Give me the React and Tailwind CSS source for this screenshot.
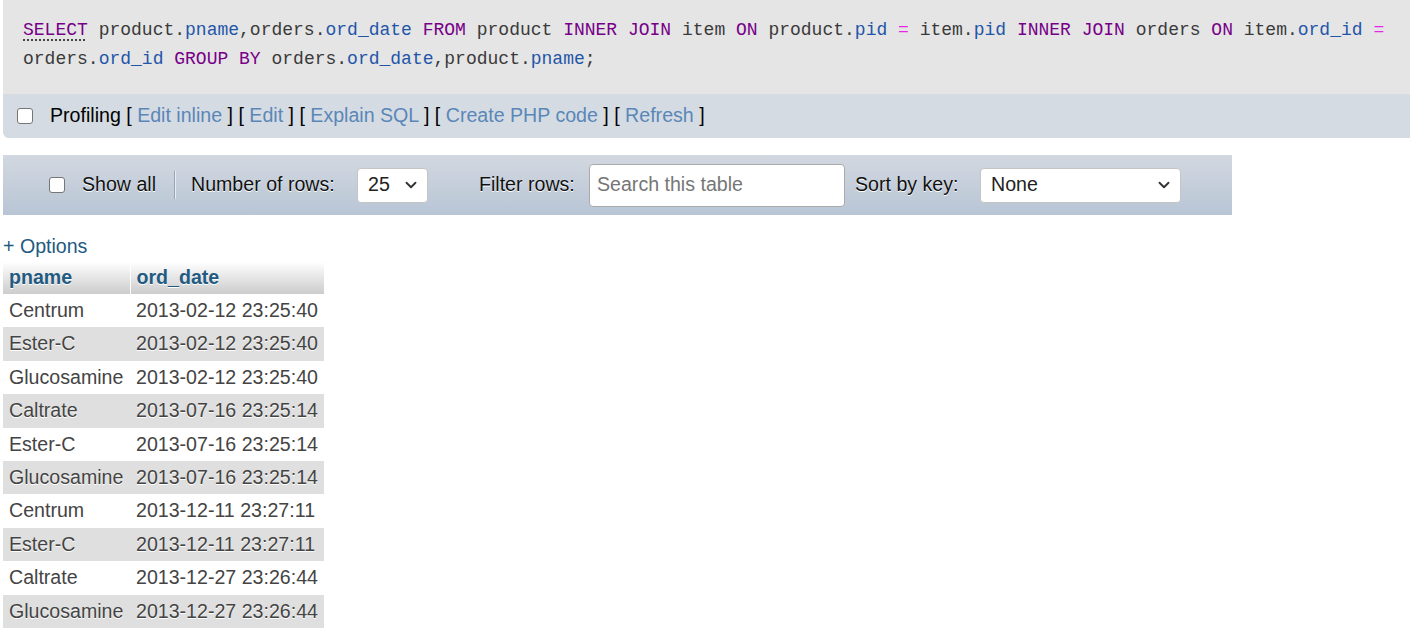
import React from 'react';
import { ChevronDown } from 'lucide-react';

const rows = [
  ['Centrum', '2013-02-12 23:25:40'],
  ['Ester-C', '2013-02-12 23:25:40'],
  ['Glucosamine', '2013-02-12 23:25:40'],
  ['Caltrate', '2013-07-16 23:25:14'],
  ['Ester-C', '2013-07-16 23:25:14'],
  ['Glucosamine', '2013-07-16 23:25:14'],
  ['Centrum', '2013-12-11 23:27:11'],
  ['Ester-C', '2013-12-11 23:27:11'],
  ['Caltrate', '2013-12-27 23:26:44'],
  ['Glucosamine', '2013-12-27 23:26:44'],
];

const Kw = ({ children }) => <span className="text-[#770088]">{children}</span>;
const Id = ({ children }) => <span className="text-[#1f56a8]">{children}</span>;
const Op = ({ children }) => <span className="text-[#e625e6]">{children}</span>;

const Checkbox = () => (
  <div className="w-[16px] h-[16px] bg-white border border-[#767676] rounded-[3px] shrink-0" />
);

const Select = ({ value, width }) => (
  <div
    className={`${width} h-[35px] bg-white border border-[#c5c5c5] rounded-[4px] flex items-center justify-between pl-[10px] pr-[7px] text-[#222] [text-shadow:none] shrink-0`}
  >
    <span>{value}</span>
    <ChevronDown size={18} strokeWidth={2.5} className="text-[#333]" />
  </div>
);

const Link = ({ children }) => <span className="text-[#5a87b8]">{children}</span>;

export default function App() {
  return (
    <div className="w-[1410px] h-[644px] overflow-hidden bg-white pl-[3px] font-['Liberation_Sans',Arial,sans-serif] text-[19.6px]">
      {/* SQL query box */}
      <div className="bg-[#e5e5e5] rounded-bl-[6px] overflow-hidden">
        <pre className="pl-[20px] pt-[16px] pb-[20px] font-['Liberation_Mono','DejaVu_Sans_Mono',monospace] text-[18px] leading-[29px] text-[#3a3a3a]">
          <span className="text-[#770088] underline decoration-dotted decoration-[#333] underline-offset-[5px]">SELECT</span>{' '}
          product.<Id>pname</Id>,orders.<Id>ord_date</Id> <Kw>FROM</Kw> product <Kw>INNER JOIN</Kw> item <Kw>ON</Kw> product.<Id>pid</Id> <Op>=</Op> item.<Id>pid</Id> <Kw>INNER JOIN</Kw> orders <Kw>ON</Kw> item.<Id>ord_id</Id> <Op>=</Op>
          {'\n'}orders.<Id>ord_id</Id> <Kw>GROUP BY</Kw> orders.<Id>ord_date</Id>,product.<Id>pname</Id>;
        </pre>
        <div className="h-[44px] bg-[#d5dbe2] flex items-center pl-[14px] text-black">
          <Checkbox />
          <span className="ml-[17px] whitespace-pre">
            Profiling [ <Link>Edit inline</Link> ] [ <Link>Edit</Link> ] [ <Link>Explain SQL</Link> ] [ <Link>Create PHP code</Link> ] [ <Link>Refresh</Link> ]
          </span>
        </div>
      </div>

      {/* Navigation bar */}
      <div className="mt-[17px] w-[1229px] h-[60px] bg-gradient-to-b from-[#d2d8e0] to-[#b8c5d5] flex items-center pl-[46px] text-[#111] [text-shadow:0_1px_0_#fff] whitespace-nowrap">
        <Checkbox />
        <span className="ml-[17px] w-[92px]">Show all</span>
        <div className="w-[2px] h-[28px] bg-[#9aa4b0] border-r border-[#e8edf2] shrink-0" />
        <span className="ml-[15px] w-[166px]">Number of rows:</span>
        <Select value="25" width="w-[71px]" />
        <span className="ml-[51px] w-[110px]">Filter rows:</span>
        <div className="w-[256px] h-[43px] bg-white border border-[#aaa] rounded-[4px] flex items-center pl-[7px] text-[#767676] [text-shadow:none] shrink-0">
          Search this table
        </div>
        <span className="ml-[10px] w-[125px]">Sort by key:</span>
        <Select value="None" width="w-[201px]" />
      </div>

      {/* Options */}
      <div className="mt-[19px] leading-[24px] text-[#235a81]">+ Options</div>

      {/* Result table */}
      <table className="mt-[4px] border-collapse table-fixed w-[321px] text-[#444]">
        <thead>
          <tr className="bg-gradient-to-b from-[#ffffff] to-[#cccccc]">
            <th className="w-[127px] h-[32px] px-[6px] text-left font-bold text-[#235a81] border-r border-white [text-shadow:0_1px_0_#fff]">
              pname
            </th>
            <th className="w-[194px] h-[32px] px-[6px] text-left font-bold text-[#235a81] [text-shadow:0_1px_0_#fff]">
              ord_date
            </th>
          </tr>
        </thead>
        <tbody>
          {rows.map(([name, date], i) => (
            <tr key={i} className={i % 2 === 0 ? 'bg-white' : 'bg-[#dfdfdf]'}>
              <td className="px-[6px] py-[2px] leading-[29.4px] whitespace-nowrap overflow-hidden [text-shadow:0_1px_0_#fff]">{name}</td>
              <td className="px-[6px] py-[2px] leading-[29.4px] whitespace-nowrap overflow-hidden [text-shadow:0_1px_0_#fff]">{date}</td>
            </tr>
          ))}
        </tbody>
      </table>
    </div>
  );
}
